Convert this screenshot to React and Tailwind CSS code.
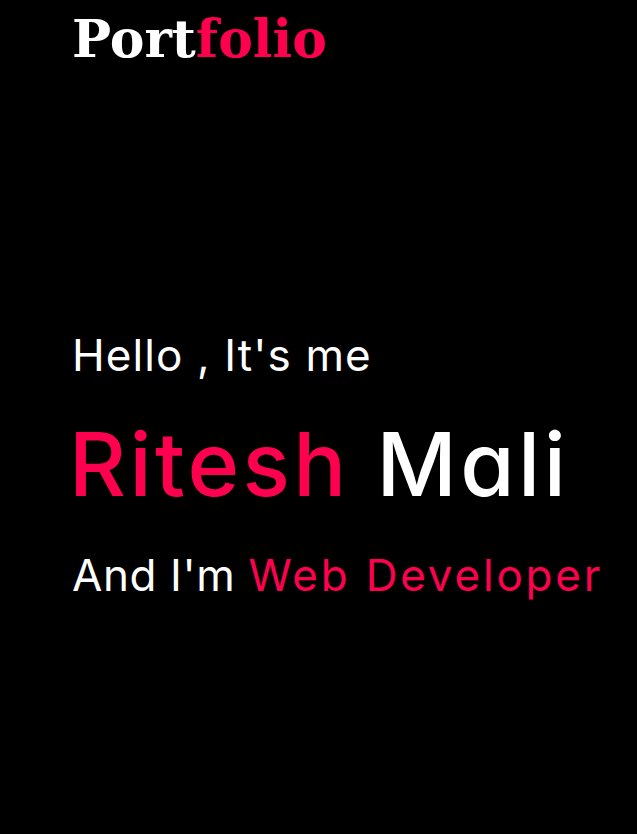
import React from "react";

const sans = "font-['Inter','Liberation_Sans',sans-serif] [font-feature-settings:'cv11']";

export default function App() {
  return (
    <div className="min-h-[834px] bg-black px-[72px] text-white">
      {/* Header */}
      <header className="pt-[13px]">
        <a href="#" className="font-['DejaVu_Serif',serif] text-[52px] font-bold leading-none text-white">
          Port<span className="text-[#ff004f]">folio</span>
        </a>
      </header>

      {/* Hero */}
      <section className={`${sans} pt-[264px] whitespace-nowrap`}>
        <h3 className="text-[44px] leading-[1.2] font-normal tracking-[1.1px]">Hello , It's me</h3>
        <h1 className="mt-[30px] -ml-[3px] text-[88px] leading-[1.2] font-medium tracking-[3.4px]">
          <span className="text-[#ff004f]">Ritesh</span> Mali
        </h1>
        <h3 className="mt-[32px] text-[44px] leading-[1.2] font-normal tracking-[0.6px]">
          And I'm <span className="text-[#ff004f] tracking-[2.8px]">Web Developer</span>
        </h3>
      </section>
    </div>
  );
}
